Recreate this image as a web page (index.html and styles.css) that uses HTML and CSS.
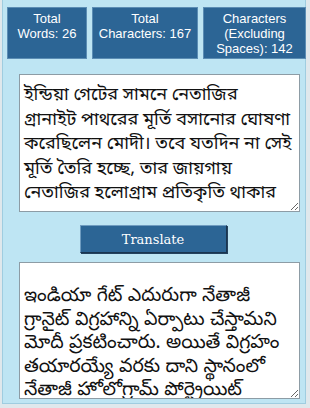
FILE: index.html
```html
<!DOCTYPE html>
<html>
<head>
  <link rel="stylesheet" href="styles.css">
</head>
<body>
  <div class="frame">
    <div class="stats">
      <div class="stat">Total<br>Words: 26</div>
      <div class="stat">Total<br>Characters: 167</div>
      <div class="stat">Characters<br>(Excluding<br>Spaces): 142</div>
    </div>
    <textarea class="box source">ইন্ডিয়া গেটের সামনে নেতাজির গ্রানাইট পাথরের মূর্তি বসানোর ঘোষণা করেছিলেন মোদী। তবে যতদিন না সেই মূর্তি তৈরি হচ্ছে, তার জায়গায় নেতাজির হলোগ্রাম প্রতিকৃতি থাকার কথা।</textarea>
    <div class="actions">
      <button class="translate">Translate</button>
    </div>
    <textarea class="box target">ఇండియా గేట్ ఎదురుగా నేతాజీ గ్రానైట్ విగ్రహాన్ని ఏర్పాటు చేస్తామని మోదీ ప్రకటించారు. అయితే విగ్రహం తయారయ్యే వరకు దాని స్థానంలో నేతాజీ హోలోగ్రామ్ పోర్ట్రెయిట్ ఉంటుంది.</textarea>
  </div>
</body>
</html>
```

FILE: styles.css
```css
html {
  background: #dfe8ec;
}

body {
  margin: 0;
  padding: 0 4px 0 2px;
  font-family: "Liberation Sans", Arial, sans-serif;
}

.frame {
  background: #bee5f3;
  border-left: 1px solid #9fcde0;
  border-right: 1px solid #9fcde0;
  border-bottom: 1px solid #9fcde0;
  height: 404px;
  box-sizing: border-box;
  padding: 7px 0 0 4px;
}

.stats {
  display: grid;
  grid-template-columns: 80px 106px 103px;
  gap: 5px;
}

.stat {
  background: #2c6595;
  border: 1px solid #5b8db4;
  color: #fff;
  text-align: center;
  font-size: 13px;
  line-height: 15px;
  height: 52px;
  box-sizing: border-box;
  padding-top: 3px;
}

.box {
  display: block;
  width: 281px;
  margin: 15px 0 0 12px;
  box-sizing: border-box;
  border: 1px solid #8d9ca5;
  background: #fff;
  color: #111;
  resize: both;
}

.source {
  height: 138px;
  overflow: hidden;
  padding: 8px 6px 0 4px;
  font-family: "Noto Sans Bengali", "Lohit Bengali", sans-serif;
  font-size: 18px;
  line-height: 24.5px;
}

.target {
  height: 137px;
  margin-top: 9px;
  overflow-y: scroll;
  padding: 23px 5px 0 4px;
  font-family: "Noto Sans Telugu", "Lohit Telugu", sans-serif;
  font-size: 19px;
  line-height: 23.5px;
}

.target::-webkit-scrollbar {
  width: 9px;
  background: #fff;
}

.target::-webkit-scrollbar-thumb {
  background: #a9a9a9;
  border-left: 3px solid #fff;
  border-right: 4px solid #fff;
  border-top: 3px solid #fff;
}

.actions {
  display: flex;
  justify-content: center;
  margin-top: 13px;
  padding-right: 6px;
}

.translate {
  width: 147px;
  height: 28px;
  background: #2c6595;
  color: #fff;
  border: 1px solid;
  border-color: #6f9cc0 #1a3550 #1a3550 #6f9cc0;
  box-shadow: 1px 1px 0 #24425e;
  font-family: "DejaVu Serif", serif;
  font-size: 13px;
}
```
